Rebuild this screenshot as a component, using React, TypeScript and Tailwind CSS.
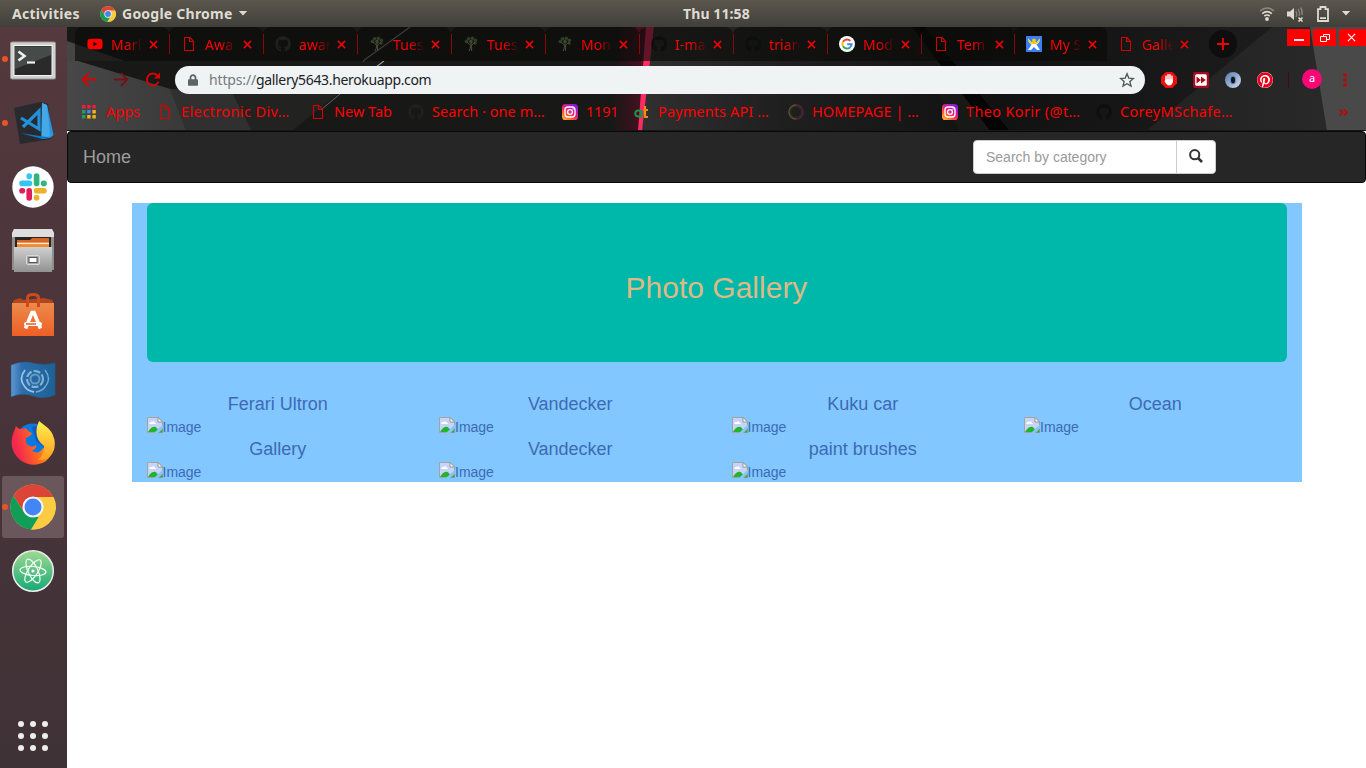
import React from "react";
import { FaYoutube, FaGithub, FaPinterest, FaLock } from "react-icons/fa";

/* ---------- small icons ---------- */

const ChromeLogo = ({ className }: { className: string }) => (
  <svg viewBox="0 0 48 48" className={className}>
    <circle cx="24" cy="24" r="23.5" fill="#fbcb42" />
    <path d="M3.6 12.3A23.5 23.5 0 0 1 45.5 14.5H24L14.2 29Z" fill="#db4437" />
    <path d="M3.6 12.3L14.8 30L24 34.5H32L22 47.4A23.5 23.5 0 0 1 3.6 12.3Z" fill="#0f9d58" />
    <path d="M32.5 30L22 47.4A23.5 23.5 0 0 0 45.5 13.5H24Z" fill="#fbcb42" />
    <circle cx="24" cy="24" r="11" fill="#f4f4f4" />
    <circle cx="24" cy="24" r="8.8" fill="#4285f4" />
  </svg>
);

const FileIcon = () => (
  <svg viewBox="0 0 16 16" className="h-4 w-4 shrink-0" fill="none" stroke="#d40000" strokeWidth="1.1">
    <path d="M3.5 1.5H9L12.5 5.2V14.5H3.5Z" />
    <path d="M8.5 1.5V5.5H12.5" />
  </svg>
);

const GithubIcon = () => <FaGithub className="h-4 w-4 shrink-0 text-[#0d0e0f]" />;
const GithubIconLight = () => <FaGithub className="h-4 w-4 shrink-0 text-[#1e2021]" />;

const TreeIcon = () => (
  <svg viewBox="0 0 16 16" className="h-4 w-4 shrink-0">
    <g fill="#2f3f26">
      <circle cx="3.4" cy="5.4" r="1.8" />
      <circle cx="5.6" cy="2.8" r="1.8" />
      <circle cx="9.3" cy="2.4" r="1.8" />
      <circle cx="12.4" cy="4.4" r="1.8" />
      <circle cx="12.2" cy="7.3" r="1.5" />
      <circle cx="8" cy="5.6" r="1.9" />
    </g>
    <path d="M6 15L7.4 12V9L4 6M8.6 15V9L12 6M8 9V4" stroke="#4d4f38" strokeWidth="1" fill="none" />
  </svg>
);

const GoogleIcon = () => (
  <svg viewBox="0 0 16 16" className="h-4 w-4 shrink-0">
    <circle cx="8" cy="8" r="8" fill="#fff" />
    <g fill="none" strokeWidth="2">
      <path d="M11.4 4.9A4.6 4.6 0 0 0 4 5.8" stroke="#ea4335" />
      <path d="M4 5.8A4.6 4.6 0 0 0 4 10.2" stroke="#fbbc05" />
      <path d="M4 10.2A4.6 4.6 0 0 0 11 11.4" stroke="#34a853" />
      <path d="M11 11.4A4.6 4.6 0 0 0 12.6 8.2H8.2" stroke="#4285f4" />
    </g>
  </svg>
);

const FigureIcon = () => (
  <svg viewBox="0 0 16 16" className="h-4 w-4 shrink-0">
    <rect width="16" height="16" fill="#3b7ff5" />
    <path d="M2 2.5L5.5 6H10.5L14 2.5L13 6.5L10.5 8.5L14 14H11L8 11L5 14H2L5.5 8.5L3 6.5Z" fill="#fff" />
    <path d="M2 2.5L5.5 6H10.5L14 2.5L13 6.5L10 8H6L3 6.5Z" fill="#f2cb1d" />
    <circle cx="8" cy="4.6" r="2" fill="#f2cb1d" />
  </svg>
);

const InstagramIcon = () => (
  <svg viewBox="0 0 16 16" className="h-4 w-4 shrink-0">
    <defs>
      <linearGradient id="insta" x1="0" y1="1" x2="0.8" y2="0">
        <stop offset="0" stopColor="#ffc83d" />
        <stop offset="0.35" stopColor="#fb5a2c" />
        <stop offset="0.6" stopColor="#e0198c" />
        <stop offset="1" stopColor="#7d1be0" />
      </linearGradient>
    </defs>
    <rect width="16" height="16" rx="3.6" fill="url(#insta)" />
    <rect x="3" y="3" width="10" height="10" rx="3" fill="none" stroke="#fff" strokeWidth="1.3" />
    <circle cx="8" cy="8" r="2.4" fill="none" stroke="#fff" strokeWidth="1.3" />
    <circle cx="11" cy="5" r="0.7" fill="#fff" />
  </svg>
);

const AtIcon = () => (
  <svg viewBox="0 0 16 16" className="h-4 w-4 shrink-0" fill="none">
    <circle cx="4.4" cy="9.5" r="3.1" stroke="#12964a" strokeWidth="2" />
    <path d="M7.6 6V13.5" stroke="#12964a" strokeWidth="2" />
    <path d="M11 2V13H14M9.5 6H14" stroke="#f28a12" strokeWidth="2.2" />
  </svg>
);

const RingIcon = () => (
  <svg viewBox="0 0 16 16" className="h-4 w-4 shrink-0" fill="none" strokeWidth="1.4">
    <path d="M8 1A7 7 0 0 0 8 15" stroke="#5a5526" />
    <path d="M8 1A7 7 0 0 1 8 15" stroke="#592545" />
    <circle cx="8" cy="8" r="5.4" stroke="#3c3020" strokeWidth="0.8" />
  </svg>
);

const AppsIcon = () => (
  <svg viewBox="0 0 16 16" className="h-4 w-4 shrink-0">
    <path d="M0 1h3.4v3.4H0zM5.2 1h3.4v3.4H5.2zM10.4 1h3.4v3.4h-3.4z" fill="#f01c3c" />
    <path d="M0 6h3.4v3.4H0zM0 11h3.4v3.4H0z" fill="#1ba260" />
    <path d="M5.2 6h3.4v3.4H5.2z" fill="#4285f4" />
    <path d="M5.2 11h3.4v3.4H5.2zM10.4 6h3.4v3.4h-3.4zM10.4 11h3.4v3.4h-3.4z" fill="#f9b316" />
  </svg>
);

const Cross = () => (
  <svg viewBox="0 0 10 10" className="h-[9px] w-[9px]" stroke="#f00000" strokeWidth="1.7">
    <path d="M1 1L9 9M9 1L1 9" />
  </svg>
);

const BrokenImage = () => (
  <svg viewBox="0 0 16 16" className="h-4 w-4">
    <path d="M0.5 0.5H11L15.5 5V15.5H0.5Z" fill="#c6d4f8" stroke="#a3a3a3" />
    <path d="M2 7Q3 4 5 5Q7 3 8 6Q9 6 9 7Z" fill="#fff" />
    <path d="M1 15Q4 9.5 8 9.8Q10 10 12 15Z" fill="#23b42d" />
    <path d="M11 0.5V5H15.5Z" fill="#fff" stroke="#8f8f8f" strokeWidth="0.9" />
    <path d="M7 16L16 7.5V11L11 16Z" fill="#82c7ff" />
    <path d="M12 15.5H15.5V12Z" fill="#23b42d" stroke="#8f8f8f" strokeWidth="0.6" />
  </svg>
);

/* ---------- desktop top bar ---------- */

function TopBar() {
  return (
    <header className="flex h-[27px] shrink-0 items-center bg-linear-to-b from-[#5b574d] to-[#403f3a] text-[14px] font-bold text-[#dfdbd2]">
      <span className="ml-3 w-[68px] whitespace-nowrap tracking-[0.27px]">Activities</span>
      <ChromeLogo className="ml-5 h-4 w-4" />
      <span className="ml-[6px] w-[112px] whitespace-nowrap tracking-[0.24px]">Google Chrome</span>
      <svg viewBox="0 0 10 6" className="ml-1 h-[5px] w-[10px]" fill="#dfdbd2"><path d="M0 0H10L5 5.5Z" /></svg>
      <span className="ml-[435px] w-[68px] whitespace-nowrap tracking-[0.1px]">Thu 11:58</span>
      <svg viewBox="0 0 16 16" className="ml-[508px] h-4 w-4" fill="none" strokeWidth="1.6">
        <path d="M1 5Q8 -1 15 5" stroke="#8a877f" />
        <path d="M3.2 7.6Q8 3.6 12.8 7.6M5.3 10Q8 8 10.7 10" stroke="#dfdbd2" />
        <circle cx="8" cy="13" r="1.9" fill="#dfdbd2" />
      </svg>
      <svg viewBox="0 0 18 16" className="ml-[11px] h-4 w-[18px]" fill="none">
        <path d="M1 5.5H4L8 2V14L4 10.5H1Z" fill="#dfdbd2" />
        <path d="M10 5Q11.5 8 10 11M12 3Q14.5 7 13 10M14.5 1.5Q17 5 16 9" stroke="#8a877f" strokeWidth="1.3" />
        <path d="M12.5 11.5L16.5 15.5M16.5 11.5L12.5 15.5" stroke="#dfdbd2" strokeWidth="1.6" />
      </svg>
      <svg viewBox="0 0 12 16" className="ml-[13px] h-4 w-3" fill="none" stroke="#dfdbd2" strokeWidth="1.8">
        <path d="M1 3.2H3.5V1H8.5V3.2H11V15H1ZM3 12.2H9" />
      </svg>
      <svg viewBox="0 0 10 6" className="ml-3 h-[5px] w-[10px]" fill="#dfdbd2"><path d="M0 0H10L5 5.5Z" /></svg>
    </header>
  );
}

/* ---------- dock ---------- */

const Terminal = () => (
  <svg viewBox="0 0 46 40" className="mt-1 h-10 w-[46px]">
    <rect x="0.5" y="1" width="45" height="37" rx="1.5" fill="#d0d0d0" stroke="#979797" />
    <rect x="4" y="4.5" width="38" height="30" fill="#2a2a2a" stroke="#f2f2f2" />
    <path d="M5 5.5H41V14L5 28Z" fill="#464a48" />
    <path d="M8.5 10.5L14.5 15L8.5 19.5" stroke="#f0f0f0" strokeWidth="2.6" fill="none" />
    <path d="M17 21.5H25" stroke="#f0f0f0" strokeWidth="2.2" />
  </svg>
);

const VsCode = () => (
  <svg viewBox="0 0 44 44" className="ml-1 h-11 w-11">
    <path d="M1 7L27 1L35 3L38 38L7 43Z" fill="#292a2d" />
    <path d="M29 2L34 4L40.5 34L37 37L28.5 38Z" fill="#2797e0" />
    <path d="M29 2L34 4L37 35L28.5 38Z" fill="#43a9e9" />
    <path d="M7 32L37 36.5L29 38Z" fill="#0a7ac6" />
    <path d="M8 17L26 28V10L10 26" stroke="#2091da" strokeWidth="3.2" fill="none" />
  </svg>
);

const Slack = () => (
  <svg viewBox="0 0 42 42" className="h-[42px] w-[42px]">
    <circle cx="21" cy="21" r="20.7" fill="#fff" />
    <g strokeWidth="5.6" strokeLinecap="round">
      <path d="M10 17.4H17.4" stroke="#36c5f0" />
      <path d="M17.2 10V10.4" stroke="#36c5f0" />
      <path d="M24.6 10V17.4" stroke="#2eb67d" />
      <path d="M31.6 17.4H32" stroke="#2eb67d" />
      <path d="M24.6 24.7H32" stroke="#ecb22e" />
      <path d="M24.6 31.6V32" stroke="#ecb22e" />
      <path d="M17.2 24.7V32" stroke="#e01e5a" />
      <path d="M10 24.7H10.4" stroke="#e01e5a" />
    </g>
  </svg>
);

const Files = () => (
  <svg viewBox="0 0 44 46" className="mb-px h-[46px] w-11">
    <defs>
      <linearGradient id="cabinet" x1="0" y1="0" x2="0" y2="1">
        <stop offset="0" stopColor="#d0d0d0" />
        <stop offset="1" stopColor="#929292" />
      </linearGradient>
    </defs>
    <path d="M3 1H41L43 5V42H1V5Z" fill="#8e8e8e" />
    <path d="M3 1H41L43 5V9H1V5Z" fill="#dedede" />
    <path d="M4 9H40V19H4Z" fill="#282420" />
    <path d="M6 12H19L21 10H38V20H6Z" fill="#d7652a" />
    <path d="M6 14H38V20H6Z" fill="#f08a36" />
    <path d="M6 15.5H38" stroke="#fff0d5" strokeWidth="1.2" />
    <path d="M3 19H41V44H3Z" fill="url(#cabinet)" />
    <rect x="15.5" y="27.5" width="13" height="9" rx="1.5" fill="#a9a9a9" stroke="#d9d9d9" />
    <rect x="18" y="29.5" width="8" height="5" fill="#fff" stroke="#555" />
  </svg>
);

const Software = () => (
  <svg viewBox="0 0 44 46" className="h-[46px] w-11">
    <defs>
      <linearGradient id="bag" x1="0" y1="0" x2="0" y2="1">
        <stop offset="0" stopColor="#ec8a4c" />
        <stop offset="1" stopColor="#ef5f24" />
      </linearGradient>
    </defs>
    <path d="M3 8L9 6L12 8L33 6L41 8L43 12H1Z" fill="#b4461d" />
    <path d="M1 11H43V44H1Z" fill="url(#bag)" />
    <path d="M16.5 15V6Q16.5 2.5 22 2.5Q27.5 2.5 27.5 6V15" fill="none" stroke="#cd4a1b" strokeWidth="3" />
    <path d="M14.5 36.5L21 20.5H23L29.5 36.5" fill="none" stroke="#fff" strokeWidth="3.6" />
    <rect x="13" y="30" width="18" height="4" rx="2" fill="#fff" />
    <path d="M15 32H25" stroke="#ee6428" strokeWidth="1.6" />
  </svg>
);

const Flag = () => (
  <svg viewBox="0 0 46 38" className="mt-px h-[38px] w-[46px]">
    <defs>
      <linearGradient id="flag">
        <stop offset="0" stopColor="#6298d2" />
        <stop offset="0.25" stopColor="#2c6dad" />
        <stop offset="1" stopColor="#1b6296" />
      </linearGradient>
    </defs>
    <path d="M1 4Q12 -1 23 2T45 2V34Q34 39 23 35T1 36Z" fill="url(#flag)" stroke="#245a88" strokeWidth="0.6" />
    <g fill="none" stroke="#9dc5e2">
      <circle cx="25" cy="18" r="8" strokeWidth="2" strokeDasharray="7 2" opacity=".8" />
      <circle cx="25" cy="18" r="4.5" strokeWidth="2" opacity=".55" />
      <path d="M15 9Q8 18 15 26Q18 30 24 31" strokeWidth="1.8" />
      <path d="M35 9Q42 18 35 26Q32 30 26 31" strokeWidth="1.4" opacity=".7" />
    </g>
  </svg>
);

const Firefox = () => (
  <svg viewBox="0 0 46 48" className="h-12 w-[46px]">
    <defs>
      <linearGradient id="fox" x1="0.1" y1="0.5" x2="1" y2="0.3">
        <stop offset="0" stopColor="#f4274f" />
        <stop offset="0.5" stopColor="#ff6a20" />
        <stop offset="1" stopColor="#ffd12e" />
      </linearGradient>
      <linearGradient id="flame" x1="0" y1="0" x2="0" y2="1">
        <stop offset="0" stopColor="#fff04d" />
        <stop offset="1" stopColor="#ff9d1e" />
      </linearGradient>
    </defs>
    <circle cx="23" cy="22" r="17.5" fill="#0879e0" />
    <path d="M22 8Q30 5 34 14V28L26 22Z" fill="#26419e" opacity=".6" />
    <path d="M6 7Q8 10 10 10L16 9Q17 12 22 14Q21 17 16 19Q15 23 18 26Q22 29 26 26Q27 29 22 32Q29 36 33 29Q40 34 44 19Q46 33 36 42Q23 50 10 41Q-2 30 3 15Z" fill="url(#fox)" />
    <path d="M29 2Q34 6 38 9Q47 18 44 31Q40 42 28 41Q35 35 34 27Q22 18 29 2Z" fill="url(#flame)" />
  </svg>
);

const Atom = () => (
  <svg viewBox="0 0 44 44" className="h-11 w-11">
    <defs>
      <linearGradient id="atom" x1="0" y1="0" x2="0" y2="1">
        <stop offset="0" stopColor="#a1d993" />
        <stop offset="1" stopColor="#16a974" />
      </linearGradient>
    </defs>
    <circle cx="22" cy="22" r="20.3" fill="url(#atom)" stroke="#ededed" strokeWidth="1.5" />
    <g fill="none" stroke="#f1fff5" strokeWidth="1.2">
      <ellipse cx="22" cy="22" rx="13" ry="4.5" transform="rotate(5 22 22)" />
      <ellipse cx="22" cy="22" rx="13" ry="4.8" transform="rotate(65 22 22)" />
      <ellipse cx="22" cy="22" rx="13" ry="4.8" transform="rotate(123 22 22)" />
    </g>
    <circle cx="22" cy="22" r="1.6" fill="#fff" />
  </svg>
);

const dockItems: { icon: React.ReactNode; running?: boolean; active?: boolean }[] = [
  { icon: <Terminal />, running: true },
  { icon: <VsCode />, running: true },
  { icon: <Slack /> },
  { icon: <Files /> },
  { icon: <Software /> },
  { icon: <Flag /> },
  { icon: <Firefox /> },
  { icon: <ChromeLogo className="h-[46px] w-[46px]" />, running: true, active: true },
  { icon: <Atom /> },
];

function Dock() {
  return (
    <aside className="flex w-[67px] shrink-0 flex-col bg-linear-to-b from-[#54393e] via-[#48343a] to-[#3f3236]">
      {dockItems.map((item, i) => (
        <div key={i} className="flex h-16 items-center pl-[2px]">
          <div className={item.active ? "flex h-[62px] w-[62px] items-center rounded-[3px] bg-[#6a575c]" : "flex h-[62px] w-[62px] items-center"}>
            <span className={item.running ? "h-[6px] w-[6px] shrink-0 rounded-full bg-[#e95420]" : "h-[6px] w-[6px] shrink-0"} />
            <div className="flex w-[50px] justify-center">{item.icon}</div>
          </div>
        </div>
      ))}
      <div className="mt-auto mb-[17px] grid grid-cols-3 gap-[6px] self-start pl-[18px]">
        {Array.from({ length: 9 }, (_, i) => (
          <span key={i} className="h-[6px] w-[6px] rounded-full bg-[#eeeeec]" />
        ))}
      </div>
    </aside>
  );
}

/* ---------- browser ---------- */

const ThemeBackdrop = () => (
  <svg viewBox="67 27 1299 104" className="absolute inset-0 h-full w-full" preserveAspectRatio="none">
    <defs>
      <linearGradient id="leftSlab"><stop offset="0" stopColor="#484848" /><stop offset="1" stopColor="#2c2c2c" /></linearGradient>
      <linearGradient id="glow"><stop offset="0" stopColor="#a80030" stopOpacity="0" /><stop offset="0.7" stopColor="#a80030" stopOpacity="0.3" /><stop offset="1" stopColor="#d0003c" stopOpacity="0.7" /></linearGradient>
      <linearGradient id="midSlab"><stop offset="0" stopColor="#303030" /><stop offset="0.45" stopColor="#1f1f1f" /><stop offset="1" stopColor="#131313" /></linearGradient>
      <linearGradient id="rightSlab"><stop offset="0" stopColor="#222222" /><stop offset="1" stopColor="#2a2a2a" /></linearGradient>
      <linearGradient id="beforeRight"><stop offset="0" stopColor="#0f0f0f" /><stop offset="1" stopColor="#1c1c1c" /></linearGradient>
    </defs>
    <rect x="67" y="27" width="1299" height="104" fill="#181817" />
    <path d="M67 41L125 61H67Z" fill="#454545" />
    <path d="M67 61H78L177 91L288 128L285 131H67Z" fill="url(#leftSlab)" />
    <path d="M170 89L232 92L252 131H186Z" fill="#303030" />
    <path d="M232 92L338 94L292 131H252Z" fill="#222221" />
    <path d="M410 27L363 61M384 61L376 67" stroke="#999999" strokeWidth="1.1" />
    <path d="M340 94L322 109" stroke="#666666" />
    <path d="M655 27H900L960 131H638Z" fill="url(#midSlab)" />
    <path d="M912 27L990 131H1010L925 27Z" fill="#050505" />
    <path d="M925 27L1010 131H1146L1272 27Z" fill="url(#beforeRight)" />
    <path d="M1272 27L1146 131H1366V27Z" fill="url(#rightSlab)" />
    <path d="M1310 27L1327 131H1366V27Z" fill="#494949" />
    <path d="M620 27H652L641 131H612Z" fill="url(#glow)" />
    <path d="M646 27H654L642 131H638Z" fill="#ff2b62" />
  </svg>
);

const tabs: { icon: React.ReactNode; title: string }[] = [
  { icon: <FaYoutube className="h-4 w-4 shrink-0 text-[#f00]" />, title: "Marl" },
  { icon: <FileIcon />, title: "Awa" },
  { icon: <GithubIconLight />, title: "awar" },
  { icon: <TreeIcon />, title: "Tues" },
  { icon: <TreeIcon />, title: "Tues" },
  { icon: <TreeIcon />, title: "Mon" },
  { icon: <GithubIcon />, title: "I-ma" },
  { icon: <GithubIcon />, title: "trian" },
  { icon: <GoogleIcon />, title: "Mod" },
  { icon: <FileIcon />, title: "Tem" },
  { icon: <FigureIcon />, title: "My S" },
  { icon: <FileIcon />, title: "Galle" },
];

const tabClass = (i: number) => {
  if (i === 11) return "flex h-[34px] w-[93px] items-center rounded-t-lg pl-[11px]";
  if (i === 9 || i === 10) return "flex h-[34px] w-[93px] items-center rounded-t-lg bg-[#0a0a09]/65 pl-3";
  return "flex h-[34px] w-[94px] items-center rounded-t-lg bg-[#0a0a09]/65 pl-3";
};

function TabStrip() {
  return (
    <div className="flex h-[34px] items-start pl-2">
      {tabs.map((tab, i) => (
        <div key={i} className={tabClass(i)}>
          {tab.icon}
          <span className="ml-2 w-[32px] overflow-hidden mask-r-from-50% mask-r-to-100% whitespace-nowrap text-[14px] tracking-[0.1px] text-[#f00]">
            {tab.title}
          </span>
          <span className="ml-[6px] flex w-[9px]"><Cross /></span>
          <span className={i < 10 ? "relative -mr-px ml-auto h-5 w-px bg-[#8a0808]" : "ml-auto h-5 w-px"} />
        </div>
      ))}
      <div className="mt-[3px] ml-[9px] flex h-7 w-7 items-center justify-center rounded-full bg-[#0e0e0e]">
        <svg viewBox="0 0 12 12" className="h-3 w-3" stroke="#f00000" strokeWidth="1.9"><path d="M6 0V12M0 6H12" /></svg>
      </div>
      <div className="mt-[2px] ml-auto flex gap-[3px]">
        <span className="flex h-[17px] w-[23px] items-center justify-center bg-[#f00]">
          <svg viewBox="0 0 10 10" className="h-[10px] w-[10px]" stroke="#fff" strokeWidth="1.8"><path d="M0 7H10" /></svg>
        </span>
        <span className="flex h-[17px] w-[23px] items-center justify-center bg-[#f00]">
          <svg viewBox="0 0 10 10" className="h-[10px] w-[10px]" fill="none" stroke="#fff"><path d="M0.5 3.5H6.5V8.5H0.5ZM3.5 3.5V1.5H9.5V6.5H6.5" /></svg>
        </span>
        <span className="flex h-[17px] w-[27px] items-center justify-center bg-[#f00] pr-[3px]">
          <svg viewBox="0 0 10 10" className="h-[9px] w-[9px]" stroke="#fff" strokeWidth="1.2"><path d="M1 1L9 9M9 1L1 9" /></svg>
        </span>
      </div>
    </div>
  );
}

function Toolbar() {
  return (
    <div className="flex h-[37px] items-center pl-[14px]">
      <svg viewBox="0 0 16 16" className="h-4 w-4" fill="none" stroke="#d90000" strokeWidth="1.8"><path d="M15 7.5H2M8 1L1.6 7.5L8 14" /></svg>
      <svg viewBox="0 0 16 16" className="ml-4 h-4 w-4" fill="none" stroke="#781018" strokeWidth="1.8"><path d="M1 7.5H14M8 1L14.4 7.5L8 14" /></svg>
      <svg viewBox="0 0 16 16" className="ml-4 h-4 w-4" fill="none" stroke="#d90000" strokeWidth="1.9"><path d="M13.5 9.7A6 6 0 1 1 12.2 3.3L14 5.1" /><path d="M15 0.5V6.5H9Z" fill="#d90000" stroke="none" /></svg>
      <div className="ml-[14px] flex h-7 w-[970px] items-center rounded-full bg-[#eff3f4] pr-[10px] pl-[13px]">
        <FaLock className="h-3 w-[10px] text-[#5f6368]" />
        <span className="ml-[11px] text-[14px] tracking-[-0.35px] whitespace-nowrap text-[#202124]">
          <span className="tracking-[-0.15px] text-[#75797c]">https://</span>gallery5643.herokuapp.com
        </span>
        <svg viewBox="0 0 16 16" className="ml-auto h-4 w-4" fill="none" stroke="#55585c" strokeWidth="1.4">
          <path d="M8 1.8L9.8 6.1L14.4 6.5L10.9 9.6L12 14.1L8 11.7L4 14.1L5.1 9.6L1.6 6.5L6.2 6.1Z" />
        </svg>
      </div>
      <svg viewBox="0 0 16 16" className="ml-4 h-4 w-4">
        <path d="M4.7 0H11.3L16 4.7V11.3L11.3 16H4.7L0 11.3V4.7Z" fill="#ee1010" />
        <path d="M5 4.2V9M7 2.8V8M9 2.8V8M11 4.2V10" stroke="#fff" strokeWidth="1.5" strokeLinecap="round" />
        <path d="M4.3 7.5H11.7V10Q11 13.5 8 13.5Q6 13.5 3.6 9.4Z" fill="#fff" />
      </svg>
      <svg viewBox="0 0 16 16" className="ml-4 h-4 w-4">
        <rect width="16" height="16" rx="2" fill="#a50c20" />
        <rect x="2.2" y="2.2" width="11.6" height="11.6" rx="1.5" fill="#fff" />
        <path d="M3.5 4.5L8 8L3.5 11.5ZM8 4.5L12.8 8L8 11.5Z" fill="#a50c20" />
      </svg>
      <svg viewBox="0 0 16 16" className="ml-4 h-4 w-4">
        <defs>
          <linearGradient id="orb" x1="0" y1="0" x2="1" y2="1"><stop offset="0" stopColor="#5678ae" /><stop offset="1" stopColor="#d3e0f2" /></linearGradient>
        </defs>
        <circle cx="8" cy="8" r="8" fill="url(#orb)" />
        <ellipse cx="8" cy="8" rx="2.7" ry="4" fill="#10151d" stroke="#7c98c1" />
      </svg>
      <span className="ml-4 flex h-4 w-4 rounded-full bg-white"><FaPinterest className="h-4 w-4 text-[#e60019]" /></span>
      <span className="ml-[15px] h-4 w-px bg-[#3f0d10]" />
      <span className="-mt-[2px] ml-[13px] flex h-5 w-5 items-center justify-center rounded-full bg-[#fb0577] pb-px text-[11px] text-white">a</span>
      <svg viewBox="0 0 4 14" className="ml-[21px] h-[14px] w-1" fill="#c40000"><path d="M0.5 0.5h3v3h-3zM0.5 5.5h3v3h-3zM0.5 10.5h3v3h-3z" /></svg>
    </div>
  );
}

const bookmarks: { icon: React.ReactNode; title: string; className: string }[] = [
  { icon: <AppsIcon />, title: "Apps", className: "w-[75px]" },
  { icon: <FileIcon />, title: "Electronic Div…", className: "w-[153px] tracking-[0.4px]" },
  { icon: <FileIcon />, title: "New Tab", className: "w-[98px]" },
  { icon: <GithubIconLight />, title: "Search · one m…", className: "w-[154px] tracking-[0.05px]" },
  { icon: <InstagramIcon />, title: "1191", className: "w-[72px] tracking-[-0.2px]" },
  { icon: <AtIcon />, title: "Payments API …", className: "w-[154px] tracking-[0.12px]" },
  { icon: <RingIcon />, title: "HOMEPAGE | …", className: "w-[154px] tracking-[0.08px]" },
  { icon: <InstagramIcon />, title: "Theo Korir (@t…", className: "w-[154px] tracking-[0.35px]" },
  { icon: <GithubIcon />, title: "CoreyMSchafe…", className: "w-[154px] tracking-[0.32px]" },
];

function BookmarkBar() {
  return (
    <div className="flex h-[33px] items-center border-b border-[#181818] pb-1 pl-[15px] text-[14.5px] leading-5 text-[#f00]">
      {bookmarks.map((b, i) => (
        <div key={i} className={"flex shrink-0 items-center gap-2 whitespace-nowrap " + b.className}>
          {b.icon}
          <span className="-mt-[2px]">{b.title}</span>
        </div>
      ))}
      <svg viewBox="0 0 9 7" className="mr-[18px] ml-auto h-[7px] w-[9px]" fill="none" stroke="#c40000" strokeWidth="1.7"><path d="M0.5 0.5L3.5 3.5L0.5 6.5M5 0.5L8 3.5L5 6.5" /></svg>
    </div>
  );
}

/* ---------- web page ---------- */

const photos = ["Ferari Ultron", "Vandecker", "Kuku car", "Ocean", "Gallery", "Vandecker", "paint brushes"];

function GalleryPage() {
  return (
    <main className="flex-1 bg-white font-['Liberation_Sans',Arial,sans-serif] text-[14px] leading-5">
      <nav className="mb-5 flex h-[52px] items-center rounded border border-[#080808] bg-[#262626] pl-[15px]">
        <a className="text-[18px] text-[#9d9d9d]">Home</a>
        <form className="ml-auto mr-[149px] flex h-[34px] w-[243px] overflow-hidden rounded border border-[#cccccc] bg-white">
          <span className="flex w-[203px] items-center border-r border-[#cccccc] pl-3 text-[#999999]">Search by category</span>
          <span className="flex flex-1 items-center justify-center">
            <svg viewBox="0 0 14 14" className="mb-[3px] h-[14px] w-[14px]" fill="none" stroke="#333333"><circle cx="5.7" cy="5.7" r="4.6" strokeWidth="2" /><path d="M9 9L13 13" strokeWidth="2.6" /></svg>
          </span>
        </form>
      </nav>
      <div className="mx-auto w-[1170px] bg-[#82c7ff]">
        <div className="px-[15px] pb-[30px]">
          <div className="flex h-[159px] items-center justify-center rounded-md bg-[#00b8a9]">
            <h2 className="mt-[9px] text-[30px] leading-[33px] text-[#deb887]">Photo Gallery</h2>
          </div>
        </div>
        <div className="grid grid-cols-4 text-[#3d6ab5]">
          {photos.map((title, i) => (
            <div key={i} className="flex h-[45px] flex-col px-[15px] pt-[2px]">
              <h4 className="text-center text-[18px] leading-5">{title}</h4>
              <div className="mt-[3px] flex h-5 items-start">
                <BrokenImage />
                <span>Image</span>
              </div>
            </div>
          ))}
        </div>
      </div>
    </main>
  );
}

export default function App() {
  return (
    <div className="flex h-screen w-screen flex-col overflow-hidden font-['Noto_Sans','Open_Sans',sans-serif]">
      <TopBar />
      <div className="flex min-h-0 flex-1">
        <Dock />
        <div className="flex min-w-0 flex-1 flex-col">
          <div className="relative h-[104px] shrink-0">
            <ThemeBackdrop />
            <div className="relative flex h-full flex-col">
              <TabStrip />
              <Toolbar />
              <BookmarkBar />
            </div>
          </div>
          <GalleryPage />
        </div>
      </div>
    </div>
  );
}
